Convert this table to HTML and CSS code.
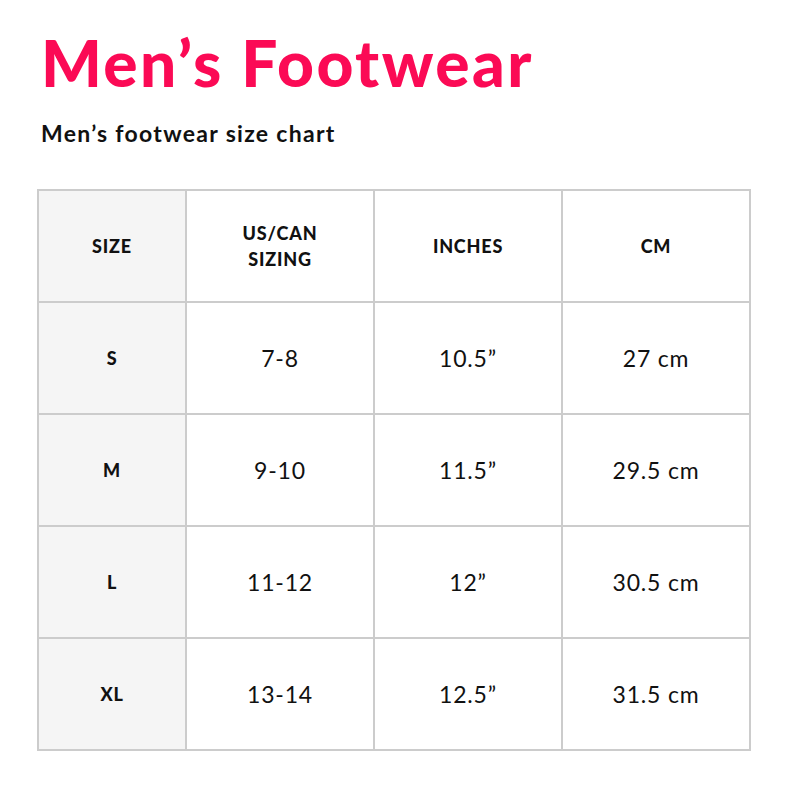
FILE: index.html
```html
<!DOCTYPE html>
<html>
<head>
<meta charset="utf-8">
<link rel="stylesheet" href="styles.css">
</head>
<body>
<div class="page">
  <h1 class="title">Men’s Footwear</h1>
  <h2 class="subtitle">Men’s footwear size chart</h2>
  <table class="chart">
    <thead>
      <tr><th class="size">SIZE</th><th>US/CAN<br>SIZING</th><th>INCHES</th><th>CM</th></tr>
    </thead>
    <tbody>
      <tr><th class="size">S</th><td>7-8</td><td>10.5”</td><td>27 cm</td></tr>
      <tr><th class="size">M</th><td>9-10</td><td>11.5”</td><td>29.5 cm</td></tr>
      <tr><th class="size">L</th><td>11-12</td><td>12”</td><td>30.5 cm</td></tr>
      <tr><th class="size">XL</th><td>13-14</td><td>12.5”</td><td>31.5 cm</td></tr>
    </tbody>
  </table>
</div>
</body>
</html>
```

FILE: styles.css
```css
html, body { margin: 0; padding: 0; background: #fff; }
.page {
  padding: 23px 0 0 37px;
  font-family: Lato, "Liberation Sans", sans-serif;
  color: #111;
}
.title {
  margin: 0 0 0 4px;
  font-size: 64px;
  line-height: 80px;
  font-weight: 900;
  color: #fb0a55;
  letter-spacing: 2.4px;
}
.subtitle {
  margin: 15px 0 0 4px;
  font-size: 23px;
  line-height: 30px;
  font-weight: 700;
  color: #111;
  letter-spacing: 1.3px;
}
.chart {
  margin-top: 41px;
  border-collapse: collapse;
  width: 714px;
  table-layout: fixed;
}
.chart th, .chart td {
  border: 2px solid #cccccc;
  height: 110px;
  text-align: center;
  vertical-align: middle;
  padding: 0;
}
.chart th {
  font-size: 18px;
  font-weight: 900;
  line-height: 26px;
  letter-spacing: 0.8px;
}
.chart td {
  font-size: 23px;
  font-weight: 400;
  letter-spacing: 0.8px;
}
.chart .size { width: 146px; background: #f5f5f5; }
```
